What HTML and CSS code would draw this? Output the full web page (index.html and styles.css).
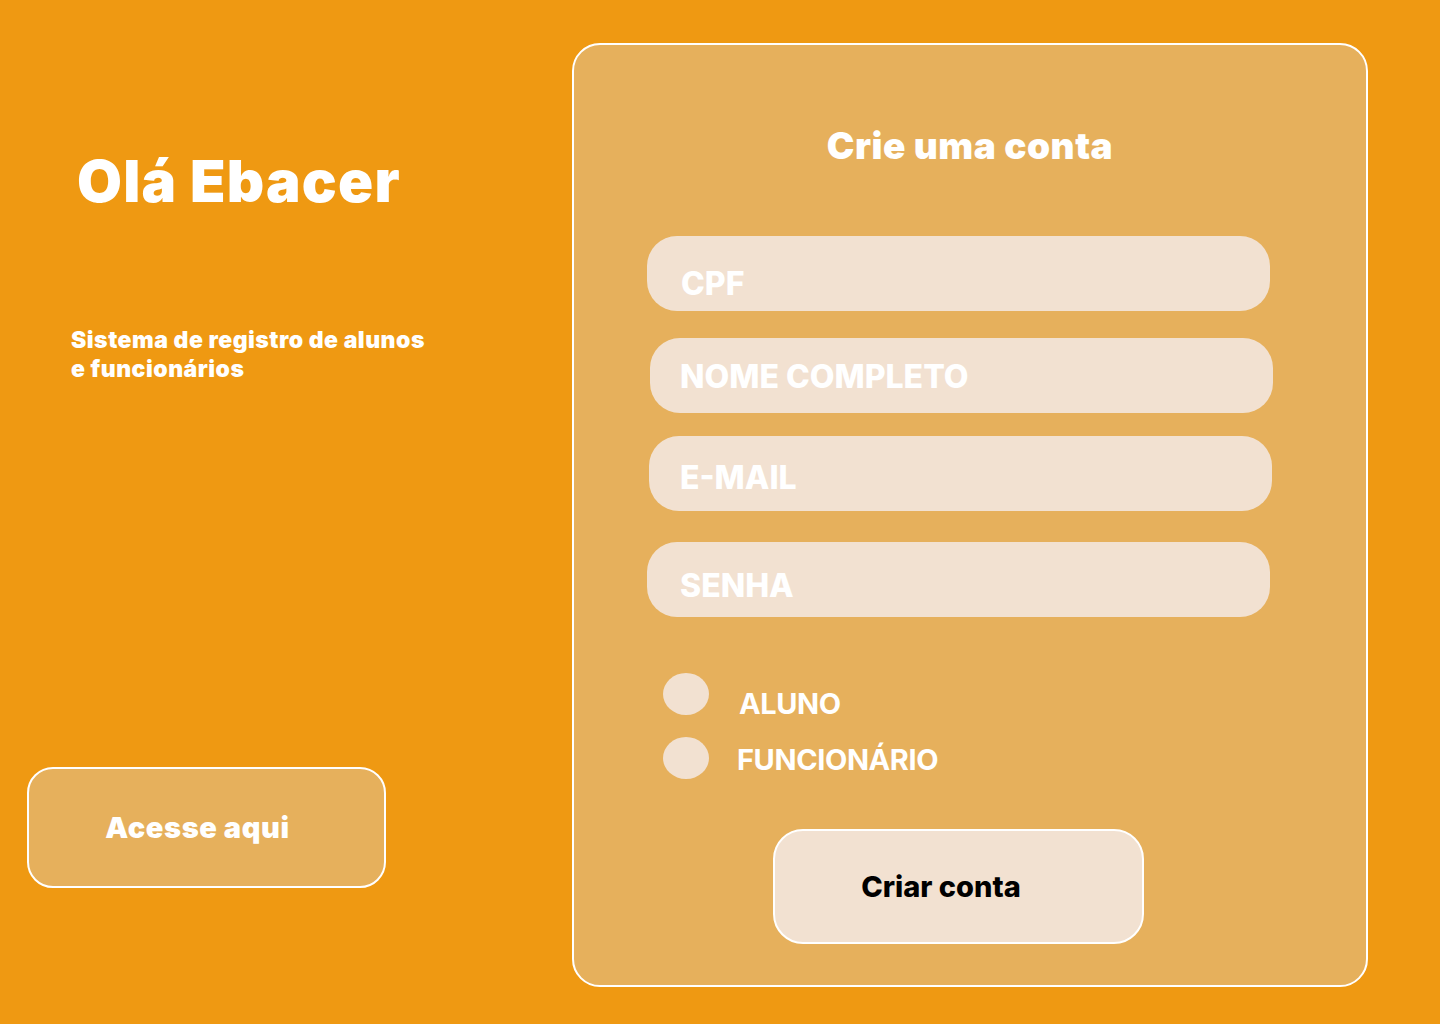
FILE: index.html
```html
<!DOCTYPE html>
<html lang="pt-BR">
<head>
<meta charset="utf-8">
<title>Crie uma conta</title>
<link rel="stylesheet" href="styles.css">
</head>
<body>
<main class="page">
  <section class="intro">
    <h1 class="intro__title">Olá Ebacer</h1>
    <p class="intro__text">Sistema de registro de alunos<br>e funcionários</p>
    <button class="access-btn" type="button">Acesse aqui</button>
  </section>
  <section class="card">
    <h2 class="card__title">Crie uma conta</h2>
    <div class="field field--cpf">CPF</div>
    <div class="field field--nome">NOME COMPLETO</div>
    <div class="field field--email">E-MAIL</div>
    <div class="field field--senha">SENHA</div>
    <div class="choices">
      <div class="choice choice--aluno">
        <span class="choice__dot"></span>
        <span class="choice__label">ALUNO</span>
      </div>
      <div class="choice choice--func">
        <span class="choice__dot"></span>
        <span class="choice__label">FUNCIONÁRIO</span>
      </div>
    </div>
    <button class="create-btn" type="button">Criar conta</button>
  </section>
</main>
</body>
</html>
```
FILE: styles.css
```css
* { box-sizing: border-box; }

html, body {
  margin: 0;
  padding: 0;
}

body {
  background: #EF9912;
  font-family: Inter, "Noto Sans", sans-serif;
  color: #ffffff;
}

.page {
  display: flex;
  width: 1440px;
  height: 1024px;
}

/* Left column */
.intro {
  width: 572px;
  display: flex;
  flex-direction: column;
  align-items: flex-start;
}

.intro__title {
  margin: 152px 0 0 77px;
  font-size: 58px;
  line-height: 1;
  font-weight: 900;
  letter-spacing: 1.2px;
}

.intro__text {
  margin: 116px 0 0 71px;
  font-size: 23px;
  line-height: 29px;
  font-weight: 900;
  letter-spacing: 0.5px;
}

.access-btn {
  margin: 383px 0 0 27px;
  width: 359px;
  height: 121px;
  padding: 0 18px 0 0;
  background: #E6B05C;
  border: 2.5px solid #ffffff;
  border-radius: 26px;
  color: #ffffff;
  font-family: inherit;
  font-size: 29px;
  font-weight: 900;
  line-height: 1;
  letter-spacing: 0.6px;
  display: flex;
  align-items: center;
  justify-content: center;
}

/* Card */
.card {
  margin-top: 43px;
  width: 796px;
  height: 944px;
  background: #E6B05C;
  border: 2.5px solid #ffffff;
  border-radius: 28px;
  padding: 81.5px 0 0 0;
  display: flex;
  flex-direction: column;
  align-items: flex-start;
}

.card__title {
  align-self: stretch;
  margin: 0;
  text-align: center;
  font-size: 37px;
  line-height: 1;
  font-weight: 900;
  letter-spacing: 0.5px;
}

.field {
  width: 623px;
  height: 75px;
  border-radius: 30px;
  background: #F2E1D1;
  padding-left: 33px;
  font-size: 32px;
  line-height: 1;
  font-weight: 800;
  color: #ffffff;
}

.field--cpf   { margin: 72px 0 0 73px; padding-top: 32px; padding-left: 34px; }
.field--nome  { margin: 27px 0 0 76px; padding-top: 23px; padding-left: 30px; }
.field--email { margin: 23px 0 0 75px; padding-top: 26px; padding-left: 31px; }
.field--senha { margin: 31px 0 0 73px; padding-top: 28px; }

.choices {
  margin: 56px 0 0 89px;
  display: flex;
  flex-direction: column;
  gap: 19px;
}

.choice {
  display: flex;
  align-items: flex-start;
}

.choice__dot {
  width: 46px;
  height: 42px;
  border-radius: 50%;
  background: #F2E1D1;
  flex: none;
}

.choice__label {
  font-size: 29px;
  line-height: 1;
  font-weight: 700;
  letter-spacing: -0.4px;
}

.choice--aluno .choice__label { margin: 16px 0 0 30px; }
.choice--func .choice__label  { margin: 8px 0 0 28px; }

.create-btn {
  margin: 50px 0 0 198.5px;
  width: 371px;
  height: 115px;
  padding: 0 34px 0 0;
  background: #F2E1D1;
  border: 2.5px solid #ffffff;
  border-radius: 30px;
  color: #000000;
  font-family: inherit;
  font-size: 29px;
  font-weight: 800;
  line-height: 1;
  display: flex;
  align-items: center;
  justify-content: center;
}
```
